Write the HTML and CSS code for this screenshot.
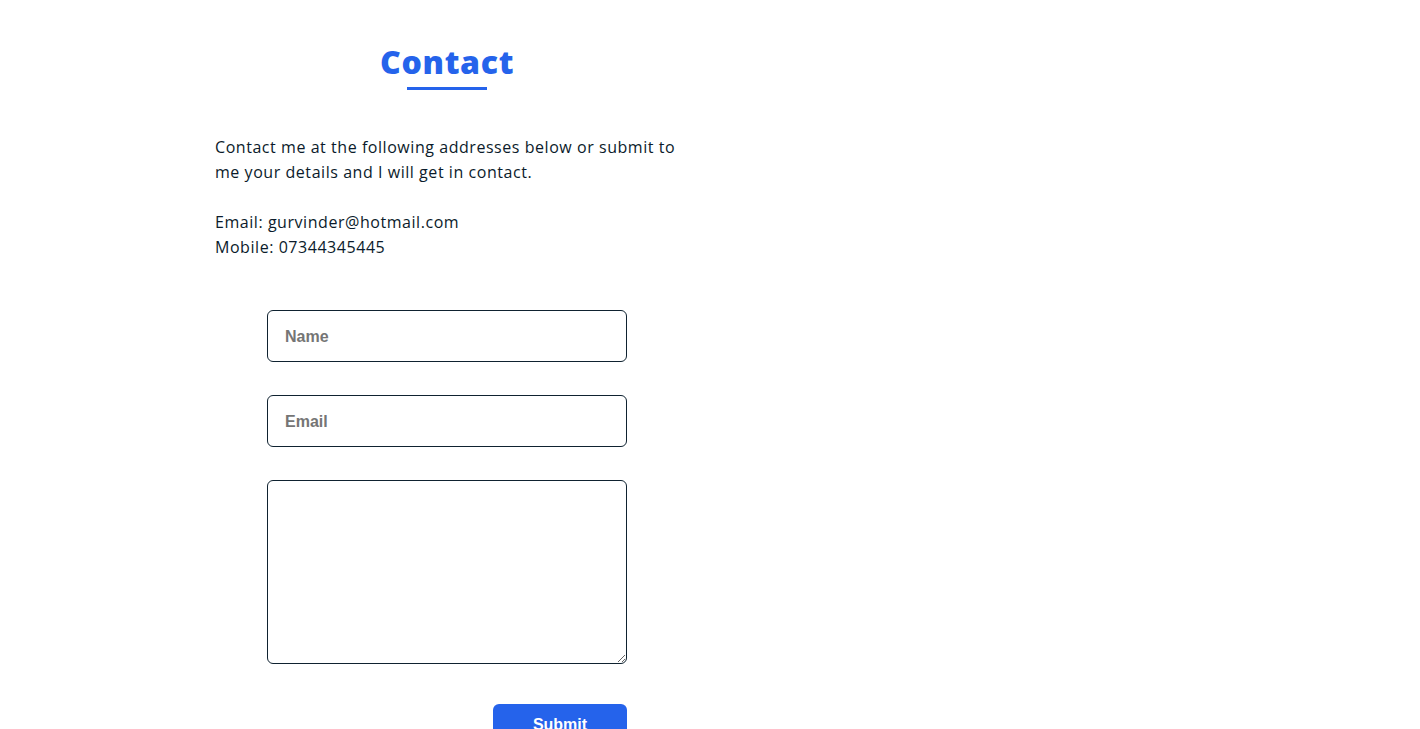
FILE: index.html
```html
<!DOCTYPE html>
<html lang="en">
<head>
<meta charset="utf-8">
<title>Contact</title>
<link rel="stylesheet" href="styles.css">
</head>
<body>
<main class="page">
  <section class="contact">
    <h1 class="contact__title">Contact</h1>
    <p class="contact__intro">Contact me at the following addresses below or submit to me your details and I will get in contact.</p>
    <p class="contact__details">Email: gurvinder@hotmail.com<br>Mobile: 07344345445</p>
    <form class="contact__form">
      <input class="field" type="text" placeholder="Name">
      <input class="field" type="email" placeholder="Email">
      <textarea class="field field--area"></textarea>
      <div class="form__actions">
        <button class="btn" type="button">Submit</button>
      </div>
    </form>
  </section>
</main>
</body>
</html>
```

FILE: styles.css
```css
* { box-sizing: border-box; }
html, body { margin: 0; padding: 0; background: #fff; }
body {
  font-family: "Open Sans", "Liberation Sans", sans-serif;
  color: #0b1b2b;
  overflow: hidden;
}
.page {
  padding: 0 0 0 215px;
}
.contact {
  width: 464px;
  display: flex;
  flex-direction: column;
  align-items: center;
}
.contact__title {
  margin: 40px 0 0;
  font-size: 32px;
  line-height: 44px;
  font-weight: 800;
  letter-spacing: 0.7px;
  color: #2563eb;
  position: relative;
  padding-bottom: 6px;
}
.contact__title::after {
  content: "";
  position: absolute;
  left: 50%;
  transform: translateX(-50%);
  bottom: 0;
  width: 80px;
  height: 3px;
  background: #2563eb;
}
.contact__intro,
.contact__details {
  align-self: stretch;
  font-size: 16px;
  line-height: 25px;
  letter-spacing: 0.55px;
  margin: 0;
}
.contact__intro { margin-top: 45px; }
.contact__details { margin-top: 25px; }
.contact__form {
  margin-top: 50px;
  width: 360px;
  display: flex;
  flex-direction: column;
  gap: 33px;
}
.field {
  display: block;
  width: 100%;
  height: 52px;
  border: 1px solid #0f2230;
  border-radius: 6px;
  padding: 2px 17px 0;
  font-family: "Liberation Sans", Arial, sans-serif;
  font-size: 16px;
  font-weight: 700;
  color: #333;
  background: #fff;
}
.field::placeholder { color: #757575; }
.field--area {
  height: 184px;
  padding: 12px 17px;
}
.form__actions {
  display: flex;
  justify-content: flex-end;
  margin-top: 7px;
}
.btn {
  width: 134px;
  height: 40px;
  border: 0;
  border-radius: 6px;
  background: #2563eb;
  color: #fff;
  font-family: "Liberation Sans", Arial, sans-serif;
  font-size: 16px;
  font-weight: 700;
  padding: 2px 0 0;
}
```
